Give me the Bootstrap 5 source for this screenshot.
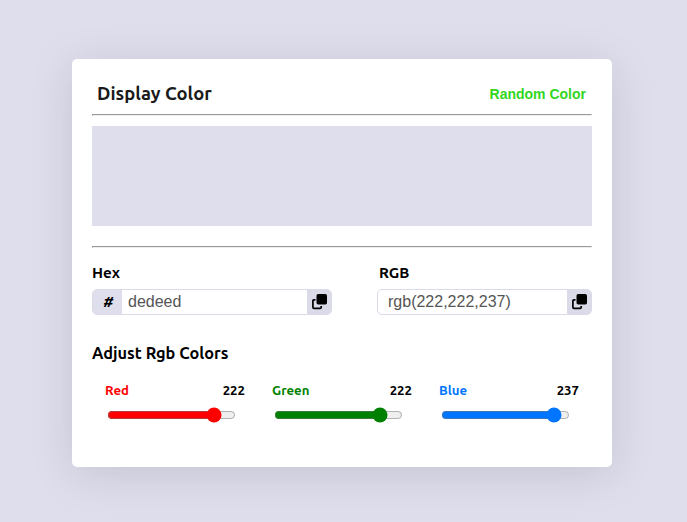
<!DOCTYPE html>
<html lang="en">
<head>
<meta charset="utf-8">
<meta name="viewport" content="width=device-width, initial-scale=1">
<title>Display Color</title>
<link href="https://cdn.jsdelivr.net/npm/bootstrap@5.3.0/dist/css/bootstrap.min.css" rel="stylesheet">
<style>
body{background:#dedeed;font-family:Ubuntu,"Noto Sans",sans-serif;font-weight:600;color:#000;line-height:20px;padding-right:3px}
.panel{width:540px;height:408px;margin-top:59px;padding:20px;border-radius:5px;box-shadow:0 7px 45px rgba(0,0,0,.12)}
.panel-head{height:35px;padding:0 6px 5px 5px}
.title{font-size:18.4px;color:#1a1a1a;padding-bottom:2px}
.random{font:bold 14px/20px "Liberation Sans",Arial,sans-serif;color:#32d61e}
.rule{height:2px;border:1px solid;border-color:#9a9a9a #eee #eee #9a9a9a}
.swatch{height:100px;margin:10px 0 20px;background:#dedeed}
.codes{margin-top:15px}
.label{font-size:15.2px}
.rgb-label{padding-left:2px}
.code{height:26px;margin-top:6px;border:1px solid #dadae8;border-radius:5px;overflow:hidden}
.hex{width:240px}.rgb{width:215px}
.hash{width:29px;background:#dedeed;font-size:15px;font-style:italic;padding-left:2px}
.value{font:16px/22px "Liberation Sans",Arial,sans-serif;color:#555;width:0;background:none;outline:0;padding:0 0 0 6px}
.rgb .value{padding-left:10px}
.copy{width:24px;background:#dadae8;padding:0 0 1px}
.adjust{font-size:16.3px;margin-top:28px}
.sliders{margin-top:17px}
.channel{width:167px;padding:0 14px 0 13px;font-size:13.2px}
.channel input{width:129px;height:16px;margin:7px 2px 0;display:block}
.red{color:#f00;accent-color:#f00}.green{color:green;accent-color:green}.blue{color:#0075ff;accent-color:#0075ff}
</style>
<script src="https://cdn.jsdelivr.net/npm/bootstrap@5.3.0/dist/js/bootstrap.bundle.min.js"></script>
</head>
<body class="d-flex justify-content-center align-items-start overflow-hidden min-vh-100">
<main class="panel bg-white">
  <div class="panel-head d-flex justify-content-between align-items-center">
    <span class="title">Display Color</span>
    <button class="random border-0 bg-transparent p-0">Random Color</button>
  </div>
  <div class="rule"></div>
  <div class="swatch"></div>
  <div class="rule"></div>
  <div class="codes d-flex justify-content-between">
    <div>
      <div class="label">Hex</div>
      <div class="code hex d-flex">
        <span class="hash flex-shrink-0 d-flex align-items-center justify-content-center">#</span>
        <input class="value border-0 flex-grow-1" value="dedeed" aria-label="Hex">
        <button class="copy flex-shrink-0 border-0 d-flex align-items-center justify-content-center" aria-label="Copy hex">
          <svg width="16" height="16" viewBox="0 0 16 16"><rect x="5.5" y="0" width="10.5" height="10.5" rx="1.7"/><path d="M4.5 5.8H3Q1.9 5.8 1.9 6.9V13.2Q1.9 14.3 3 14.3H9.1Q10.2 14.3 10.2 13.2V12" fill="none" stroke="#000" stroke-width="1.7"/></svg>
        </button>
      </div>
    </div>
    <div>
      <div class="label rgb-label">RGB</div>
      <div class="code rgb d-flex">
        <input class="value border-0 flex-grow-1" value="rgb(222,222,237)" aria-label="RGB">
        <button class="copy flex-shrink-0 border-0 d-flex align-items-center justify-content-center" aria-label="Copy rgb">
          <svg width="16" height="16" viewBox="0 0 16 16"><rect x="5.5" y="0" width="10.5" height="10.5" rx="1.7"/><path d="M4.5 5.8H3Q1.9 5.8 1.9 6.9V13.2Q1.9 14.3 3 14.3H9.1Q10.2 14.3 10.2 13.2V12" fill="none" stroke="#000" stroke-width="1.7"/></svg>
        </button>
      </div>
    </div>
  </div>
  <div class="adjust">Adjust Rgb Colors</div>
  <div class="sliders d-flex">
    <div class="channel flex-shrink-0"><div class="names d-flex justify-content-between"><span class="red">Red</span><span>222</span></div><input class="red" type="range" min="0" max="255" value="223" aria-label="Red"></div>
    <div class="channel flex-shrink-0"><div class="names d-flex justify-content-between"><span class="green">Green</span><span>222</span></div><input class="green" type="range" min="0" max="255" value="222" aria-label="Green"></div>
    <div class="channel flex-shrink-0"><div class="names d-flex justify-content-between"><span class="blue">Blue</span><span>237</span></div><input class="blue" type="range" min="0" max="255" value="237" aria-label="Blue"></div>
  </div>
</main>
</body>
</html>
